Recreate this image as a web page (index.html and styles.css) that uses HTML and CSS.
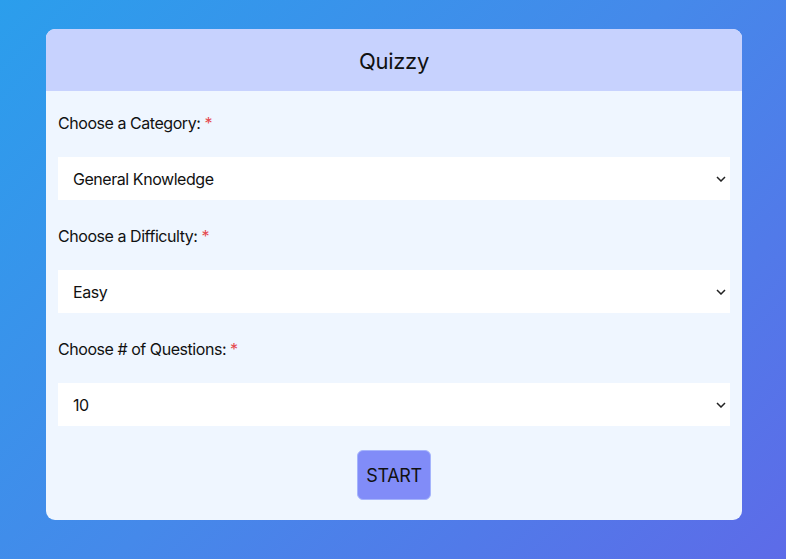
FILE: index.html
```html
<!DOCTYPE html>
<html lang="en">
<head>
<meta charset="utf-8">
<title>Quizzy</title>
<link rel="stylesheet" href="styles.css">
</head>
<body>
<main class="card">
  <header class="card-header"><h1 class="title">Quizzy</h1></header>
  <form class="card-body">
    <div class="field">
      <label class="label" for="cat">Choose a Category: <span class="req">*</span></label>
      <div class="select-wrap">
        <select id="cat" class="select"><option>General Knowledge</option></select>
        <svg class="chev" width="10" height="6" viewBox="0 0 10 6"><path d="M1 1l4 4 4-4" fill="none" stroke="#222" stroke-width="1.5"/></svg>
      </div>
    </div>
    <div class="field">
      <label class="label" for="dif">Choose a Difficulty: <span class="req">*</span></label>
      <div class="select-wrap">
        <select id="dif" class="select"><option>Easy</option></select>
        <svg class="chev" width="10" height="6" viewBox="0 0 10 6"><path d="M1 1l4 4 4-4" fill="none" stroke="#222" stroke-width="1.5"/></svg>
      </div>
    </div>
    <div class="field">
      <label class="label" for="num">Choose # of Questions: <span class="req">*</span></label>
      <div class="select-wrap">
        <select id="num" class="select"><option>10</option></select>
        <svg class="chev" width="10" height="6" viewBox="0 0 10 6"><path d="M1 1l4 4 4-4" fill="none" stroke="#222" stroke-width="1.5"/></svg>
      </div>
    </div>
    <div class="actions"><button type="button" class="start">START</button></div>
  </form>
</main>
</body>
</html>
```
FILE: styles.css
```css
html, body { height: 100%; }
body {
  margin: 0;
  padding-top: 29px;
  box-sizing: border-box;
  font-family: Inter, "Noto Sans", "Liberation Sans", sans-serif;
  background: linear-gradient(135deg, #2b9eec 0%, #4589ea 50%, #5d6be8 100%);
  color: #111;
}
.card {
  margin-left: 46px;
  width: 696px;
  border-radius: 9px;
  overflow: hidden;
  background: #eff6ff;
}
.card-header {
  background: #c7d2fe;
  height: 62px;
  display: flex;
  align-items: center;
  justify-content: center;
}
.title {
  margin: 0;
  padding-top: 2px;
  font-size: 22px;
  letter-spacing: -0.3px;
  font-weight: 400;
  color: #111;
}
.card-body {
  padding: 20px 12px 20px;
  display: flex;
  flex-direction: column;
}
.field { display: flex; flex-direction: column; margin-bottom: 24px; }
.label { font-size: 16px; letter-spacing: -0.45px; line-height: 24px; height: 24px; margin-bottom: 22px; color: #111; }
.req { color: #e5484d; }
.select-wrap { position: relative; height: 43px; }
.select {
  -webkit-appearance: none;
  appearance: none;
  display: block;
  box-sizing: border-box;
  width: 100%;
  height: 43px;
  border: none;
  border-radius: 0;
  background: #fff;
  font-family: inherit;
  font-size: 16px;
  letter-spacing: -0.45px;
  color: #111;
  padding: 0 15px;
  outline: none;
}
.chev { position: absolute; right: 4px; top: 19px; pointer-events: none; }
.actions { display: flex; justify-content: center; }
.start {
  box-sizing: border-box;
  width: 74px;
  height: 50px;
  background: #818cf8;
  border: 1px solid #a5b4fc;
  border-radius: 6px;
  font-family: inherit;
  font-size: 18px;
  letter-spacing: -0.4px;
  color: #111;
  padding: 0;
}
```
